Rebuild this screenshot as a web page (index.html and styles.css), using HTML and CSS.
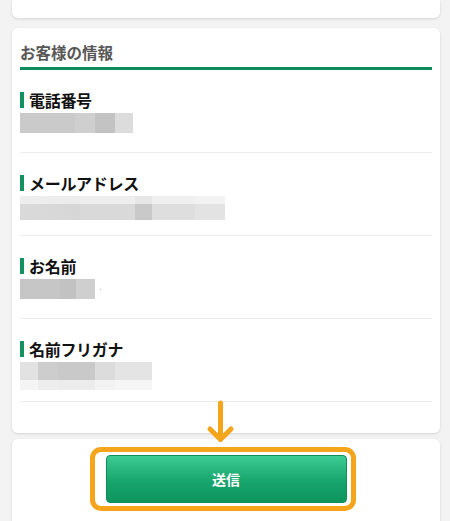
FILE: index.html
```html
<!DOCTYPE html>
<html lang="ja">
<head>
<meta charset="utf-8">
<title>お客様の情報</title>
<link rel="stylesheet" href="styles.css">
</head>
<body>
<div class="page">
  <div class="card card-top"></div>

  <section class="card info">
    <h2 class="info-title">お客様の情報</h2>
    <div class="item">
      <div class="label">電話番号</div>
      <div class="blur blur-tel"></div>
    </div>
    <div class="item">
      <div class="label">メールアドレス</div>
      <div class="blur blur-mail"></div>
    </div>
    <div class="item">
      <div class="label">お名前</div>
      <div class="blur-row"><div class="blur blur-name"></div><span class="dot"></span></div>
    </div>
    <div class="item">
      <div class="label">名前フリガナ</div>
      <div class="blur blur-kana"></div>
    </div>
  </section>

  <div class="card submit-card">
    <button class="submit" type="button">送信</button>
    <div class="highlight"></div>
  </div>

  <svg class="arrow" width="30" height="48" viewBox="0 0 30 48" aria-hidden="true">
    <path d="M15.5 5 V41" stroke="#f5a51c" stroke-width="5" stroke-linecap="round" fill="none"/>
    <path d="M5 31 L15.5 41.5 L26 31" stroke="#f5a51c" stroke-width="5" stroke-linecap="round" stroke-linejoin="round" fill="none"/>
  </svg>
</div>
</body>
</html>
```

FILE: styles.css
```css
* { box-sizing: border-box; }

html, body {
  margin: 0;
  padding: 0;
  background: #f3f3f3;
  font-family: "Noto Sans CJK JP", "Noto Sans", "Liberation Sans", sans-serif;
}

.page {
  position: relative;
  padding: 0 10px 0 12px;
  height: 521px;
  overflow: hidden;
}

.card {
  background: #ffffff;
  border-radius: 6px;
  box-shadow: 0 1px 3px rgba(0, 0, 0, 0.13);
}

.card-top {
  height: 18px;
  border-radius: 0 0 6px 6px;
  margin-bottom: 10px;
}

.info {
  padding: 13px 8px 31px 8px;
}

.info-title {
  margin: 0;
  font-size: 15.5px;
  line-height: 22px;
  font-weight: 700;
  color: #575757;
  padding-bottom: 4px;
  border-bottom: 3px solid #0f8a5c;
}

.item {
  height: 83px;
  padding-top: 19px;
  border-bottom: 1px solid #ededed;
}

.label {
  display: flex;
  align-items: center;
  font-size: 16px;
  line-height: 22px;
  font-weight: 700;
  color: #111111;
  letter-spacing: -0.3px;
}

.label::before {
  content: "";
  display: block;
  width: 4px;
  height: 16px;
  background: #13915f;
  margin-right: 5px;
}

.blur {
  margin-top: 2px;
}

.blur-tel {
  width: 113px;
  height: 20px;
  background: linear-gradient(90deg,
    #cacaca 0, #cacaca 55px,
    #cfcfcf 55px, #cfcfcf 75px,
    #c3c3c3 75px, #c3c3c3 95px,
    #dcdcdc 95px, #dcdcdc 113px);
}

.blur-mail {
  width: 205px;
  height: 24px;
  background:
    linear-gradient(180deg, rgba(255,255,255,0.55) 0, rgba(255,255,255,0.55) 8px, transparent 8px),
    linear-gradient(90deg,
      #dadada 0, #d6d6d6 60px,
      #d9d9d9 60px, #d9d9d9 115px,
      #c9c9c9 115px, #c9c9c9 132px,
      #dedede 132px, #dedede 175px,
      #e3e3e3 175px, #e3e3e3 205px);
}

.blur-row {
  display: flex;
  align-items: center;
  margin-top: 2px;
}

.blur-row .blur { margin-top: 0; }

.blur-name {
  width: 75px;
  height: 20px;
  background: linear-gradient(90deg,
    #c6c6c6 0, #c6c6c6 40px,
    #c2c2c2 40px, #c2c2c2 56px,
    #cfcfcf 56px, #cfcfcf 75px);
}

.dot {
  width: 1px;
  height: 1px;
  margin-left: 5px;
  background: #bbbbbb;
}

.blur-kana {
  width: 132px;
  height: 28px;
  background:
    linear-gradient(180deg, transparent 0, transparent 18px, rgba(255,255,255,0.65) 18px),
    linear-gradient(90deg,
      #e2e2e2 0, #e2e2e2 18px,
      #cdcdcd 18px, #cdcdcd 38px,
      #c9c9c9 38px, #c9c9c9 75px,
      #dcdcdc 75px, #dcdcdc 95px,
      #e4e4e4 95px, #e4e4e4 132px);
}

.submit-card {
  position: relative;
  margin-top: 6px;
  padding: 16px 0 40px;
  display: flex;
  justify-content: center;
}

.submit {
  width: 241px;
  height: 48px;
  border: 1px solid #0e8d59;
  border-radius: 4px;
  background: linear-gradient(180deg, #3ecc95 0%, #17a56c 55%, #0d945d 100%);
  color: #ffffff;
  font-family: "Noto Sans CJK JP", "Noto Sans", sans-serif;
  font-size: 14px;
  font-weight: 700;
  cursor: pointer;
}

.highlight {
  position: absolute;
  left: 78px;
  top: 8px;
  width: 266px;
  height: 64px;
  border: 5px solid #f5a51c;
  border-radius: 11px;
  pointer-events: none;
}

.arrow {
  position: absolute;
  left: 205px;
  top: 398px;
}
```
